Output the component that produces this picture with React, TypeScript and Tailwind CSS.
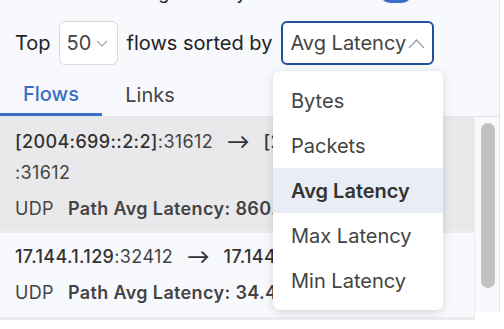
import { useState } from "react";

const sortOptions = ["Bytes", "Packets", "Avg Latency", "Max Latency", "Min Latency"];

function ChevronDown() {
  return (
    <svg width="12" height="9" viewBox="0 0 12 9" className="text-gray-400">
      <path d="M1 2 L6 7 L11 2" fill="none" stroke="currentColor" strokeWidth="1.1" />
    </svg>
  );
}

function ChevronUp() {
  return (
    <svg width="17" height="11" viewBox="0 0 17 11" className="text-gray-400">
      <path d="M1 10 L8.5 2 L16 10" fill="none" stroke="currentColor" strokeWidth="1.3" />
    </svg>
  );
}

function FlowRow({ src, srcPort, dst, dstPort, latency, active, wrapPort = false }) {
  return (
    <div
      className={`border-b-[3px] border-[#ececee] px-[15px] ${
        active ? "bg-[#e9e9eb] pt-[9px] pb-[6px]" : "bg-[#f8f9fc] pt-[8px] pb-[9px]"
      }`}
    >
      <div className="whitespace-nowrap text-[18px] leading-[31px] tracking-[0.02em] text-[#444]">
        <span className="font-medium text-[#333]">{src}</span>
        <span>:{srcPort}</span>
        <span className="mx-[13px] font-semibold text-[#333]">⟶</span>
        <span className="font-medium text-[#333]">{dst}</span>
        {!wrapPort && <span>:{dstPort}</span>}
      </div>
      {wrapPort && (
        <div className="text-[18px] leading-[31px] tracking-[0.02em] text-[#444]">:{dstPort}</div>
      )}
      <div className="mt-[5px] flex whitespace-nowrap text-[18px] leading-[31px] tracking-[0.02em] text-[#444]">
        <span className="mr-[14px]">UDP</span>
        <span className="font-semibold">Path Avg Latency: {latency}</span>
      </div>
    </div>
  );
}

export default function App() {
  const [sortBy] = useState("Avg Latency");

  return (
    <div
      className="relative h-[329px] w-[504px] overflow-hidden bg-white"
      style={{ fontFamily: "Inter, 'Noto Sans', sans-serif" }}
    >
      <div className="h-full w-[500px] border-r border-[#e3e4e8] bg-[#f8f9fc]">
        {/* row above, scrolled mostly out of view */}
        <div className="-mt-[17px] flex h-[20px] pl-[15px] text-[18px] leading-[20px] text-[#222]">
          <span className="w-[365px] whitespace-nowrap">Color flows on high latency</span>
          <span className="h-[20px] w-[32px] rounded-full bg-[#3b6fc5]" />
        </div>

        {/* controls */}
        <div className="mt-[18px] flex h-[44px] items-center pl-[15px] text-[20px] text-[#222]">
          <span>Top</span>
          <div className="ml-[8px] flex h-[44px] w-[59px] items-center justify-between rounded-[6px] border border-[#d9d9d9] bg-white pl-[7px] pr-[9px] text-[#444]">
            <span>50</span>
            <ChevronDown />
          </div>
          <span className="ml-[9px]">flows sorted by</span>
          <div className="ml-[9px] flex h-[44px] w-[153px] items-center justify-between rounded-[6px] border-2 border-[#24509a] bg-white pl-[7px] pr-[7px] text-[#444]">
            <span>{sortBy}</span>
            <ChevronUp />
          </div>
        </div>

        {/* tabs */}
        <div className="mt-[7px] flex h-[45px] border-b border-[#e2e3e6] text-[20px]">
          <div className="flex w-[102px] items-center justify-center border-b-[3px] border-[#3b6fc5] pt-[2px] font-medium text-[#3b6fc5]">
            Flows
          </div>
          <div className="flex w-[96px] items-center justify-center pt-[2px] text-[#444]">
            Links
          </div>
        </div>

        {/* list + scrollbar */}
        <div className="flex">
          <div className="w-[476px] overflow-hidden border-r border-[#ececee]">
            <FlowRow
              src="[2004:699::2:2]"
              srcPort="31612"
              dst="[2004:699::2:3]"
              dstPort="31612"
              latency="860.85 ms"
              active
              wrapPort
            />
            <FlowRow
              src="17.144.1.129"
              srcPort="32412"
              dst="17.144.1.130"
              dstPort="32412"
              latency="34.49 ms"
            />
          </div>
          <div className="w-[24px] pt-[6px] pl-[6px]">
            <div className="h-[165px] w-[14px] rounded-full bg-[#c1c1c1]" />
          </div>
        </div>
      </div>

      {/* open dropdown */}
      <div className="absolute left-[273px] top-[71px] w-[170px] rounded-[7px] bg-white py-[7px] shadow-[0_2px_10px_rgba(0,0,0,0.15)]">
        {sortOptions.map((opt) => (
          <div
            key={opt}
            className={`flex h-[45px] items-center px-[18px] text-[20px] ${
              opt === sortBy ? "bg-[#e9edf5] font-semibold text-[#333]" : "text-[#444]"
            }`}
          >
            {opt}
          </div>
        ))}
      </div>
    </div>
  );
}
